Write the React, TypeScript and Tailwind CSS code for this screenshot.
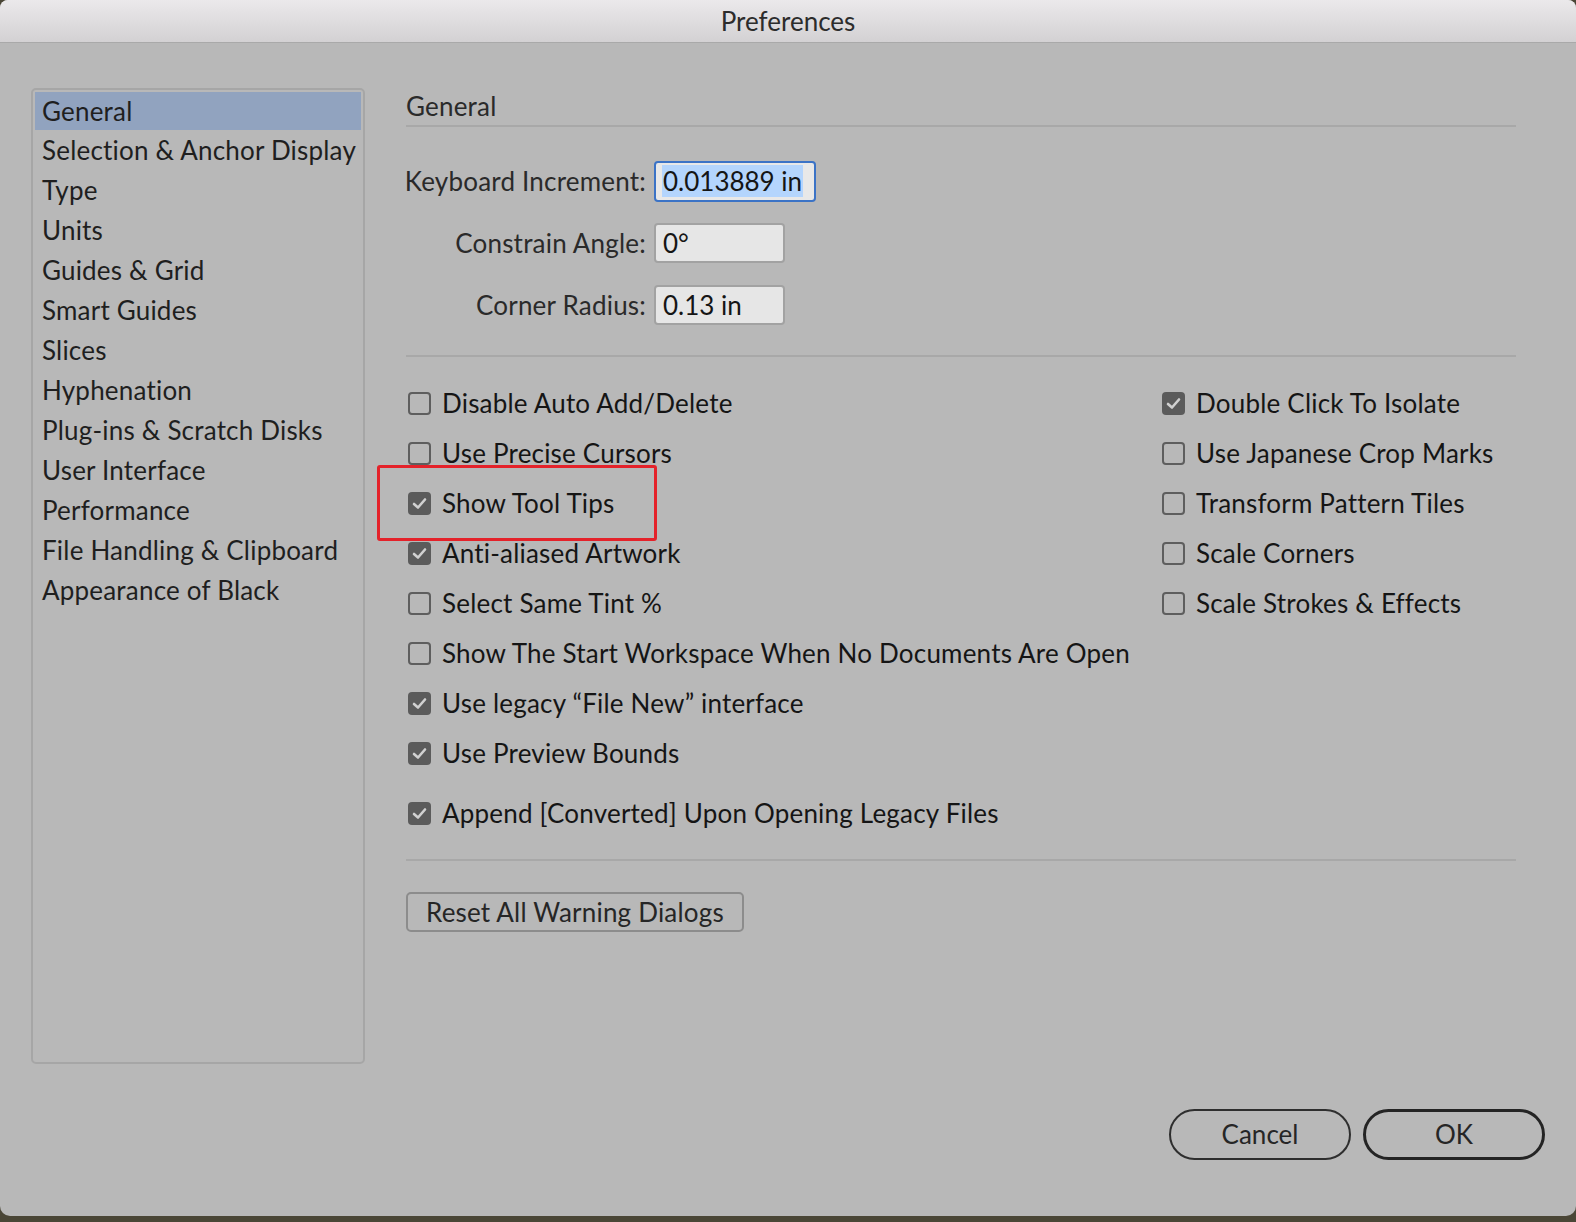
import React from 'react';

const font = { fontFamily: 'Lato, "Open Sans", sans-serif' };

const sidebarItems = [
  'General',
  'Selection & Anchor Display',
  'Type',
  'Units',
  'Guides & Grid',
  'Smart Guides',
  'Slices',
  'Hyphenation',
  'Plug-ins & Scratch Disks',
  'User Interface',
  'Performance',
  'File Handling & Clipboard',
  'Appearance of Black',
];

function Box({ checked }: { checked: boolean }) {
  if (checked) {
    return (
      <span className="flex h-[23px] w-[23px] shrink-0 items-center justify-center rounded-[4px] bg-[#5b5b5b]">
        <svg width="15" height="13" viewBox="0 0 15 13">
          <path d="M2 7 L6 10.5 L13 2.5" fill="none" stroke="#d0d0d0" strokeWidth="2.6" strokeLinecap="round" strokeLinejoin="round" />
        </svg>
      </span>
    );
  }
  return <span className="h-[23px] w-[23px] shrink-0 rounded-[4px] border-2 border-[#5e5e5e]" />;
}

function Check({ label, checked = false }: { label: string; checked?: boolean }) {
  return (
    <div className="flex h-[50px] items-center gap-[11px] pl-[2px]">
      <Box checked={checked} />
      <span className="whitespace-nowrap text-[26px] tracking-[0.2px] text-[#151515]">{label}</span>
    </div>
  );
}

function Field({ label, value, width, focused = false }: { label: string; value: string; width: string; focused?: boolean }) {
  return (
    <div className="flex h-[62px] items-center">
      <div className="flex w-[248px] shrink-0 justify-end pr-[8px]">
        <span className="whitespace-nowrap text-[26px] tracking-[0.2px] text-[#2a2a2a]">{label}</span>
      </div>
      <div
        className={
          focused
            ? `flex h-[41px] ${width} items-center rounded-[4px] border-2 border-[#3b73c6] bg-[#e8e8e8] pl-[6px]`
            : `flex h-[40px] ${width} items-center rounded-[4px] border-2 border-[#a2a2a2] bg-[#e6e6e6] pl-[7px]`
        }
      >
        <span className={focused ? 'bg-[#b4d5fd] px-[1px] text-[26px] leading-[32px] text-[#151515]' : 'text-[26px] text-[#151515]'}>
          {value}
        </span>
      </div>
    </div>
  );
}

export default function App() {
  return (
    <div className="h-[1222px] w-[1576px] overflow-hidden bg-[#4a4636]" style={font}>
      <div className="flex h-[1216px] w-[1576px] flex-col overflow-hidden rounded-b-[10px] rounded-t-[8px] bg-[#b8b8b8]">
        {/* Title bar */}
        <div className="flex h-[43px] shrink-0 items-center justify-center border-b border-[#a9a9a9] bg-gradient-to-b from-[#ebe9eb] to-[#d3d1d3]">
          <span className="text-[26px] text-[#2c2c2c]">Preferences</span>
        </div>

        <div className="flex flex-1 pl-[31px] pt-[45px]">
          {/* Sidebar */}
          <div className="h-[976px] w-[334px] shrink-0 rounded-[5px] border-2 border-[#a6a6a6] p-[2px]">
            {sidebarItems.map((item, i) => (
              <div
                key={item}
                className={
                  i === 0
                    ? 'flex h-[38px] items-center bg-[#91a3bf] pl-[7px] text-[26px] tracking-[0.2px] text-[#1f1f1f]'
                    : 'flex h-[40px] items-center pl-[7px] text-[26px] tracking-[0.2px] text-[#1f1f1f]'
                }
              >
                {item}
              </div>
            ))}
          </div>

          {/* Main panel */}
          <div className="ml-[41px] flex w-[1110px] shrink-0 flex-col">
            <div className="mt-[3px] border-b-2 border-[#a8a8a8] pb-[4px] text-[26px] leading-[30px] tracking-[0.2px] text-[#2a2a2a]">General</div>

            <div className="mt-[23px] flex flex-col">
              <Field label="Keyboard Increment:" value="0.013889 in" width="w-[162px]" focused />
              <Field label="Constrain Angle:" value="0°" width="w-[131px]" />
              <Field label="Corner Radius:" value="0.13 in" width="w-[131px]" />
            </div>

            <div className="mt-[19px] border-b-2 border-[#a8a8a8]" />

            <div className="mt-[21px] flex">
              <div className="flex w-[754px] flex-col">
                <Check label="Disable Auto Add/Delete" />
                <Check label="Use Precise Cursors" />
                <div className="relative">
                  <Check label="Show Tool Tips" checked />
                  <div className="pointer-events-none absolute left-[-29px] top-[-13px] h-[76px] w-[280px] rounded-[3px] border-[3px] border-[#e4222a]" />
                </div>
                <Check label="Anti-aliased Artwork" checked />
                <Check label="Select Same Tint %" />
                <Check label="Show The Start Workspace When No Documents Are Open" />
                <Check label="Use legacy “File New” interface" checked />
                <Check label="Use Preview Bounds" checked />
                <div className="mt-[10px]">
                  <Check label="Append [Converted] Upon Opening Legacy Files" checked />
                </div>
              </div>
              <div className="flex flex-col">
                <Check label="Double Click To Isolate" checked />
                <Check label="Use Japanese Crop Marks" />
                <Check label="Transform Pattern Tiles" />
                <Check label="Scale Corners" />
                <Check label="Scale Strokes & Effects" />
              </div>
            </div>

            <div className="mt-[21px] border-b-2 border-[#a8a8a8]" />

            <div className="mt-[31px]">
              <button className="flex h-[40px] items-center rounded-[5px] border-2 border-[#8c8c8c] px-[18px] text-[26px] tracking-[0.2px] text-[#262626]">
                Reset All Warning Dialogs
              </button>
            </div>

            <div className="mt-[177px] flex justify-end gap-[12px]">
              <button className="flex h-[51px] w-[182px] items-center justify-center rounded-full border-2 border-[#2e2e2e] text-[26px] text-[#262626]">
                Cancel
              </button>
              <button className="-mr-[29px] flex h-[51px] w-[182px] items-center justify-center rounded-full border-[3.5px] border-[#242424] text-[26px] text-[#262626]">
                OK
              </button>
            </div>
          </div>
        </div>
      </div>
    </div>
  );
}
